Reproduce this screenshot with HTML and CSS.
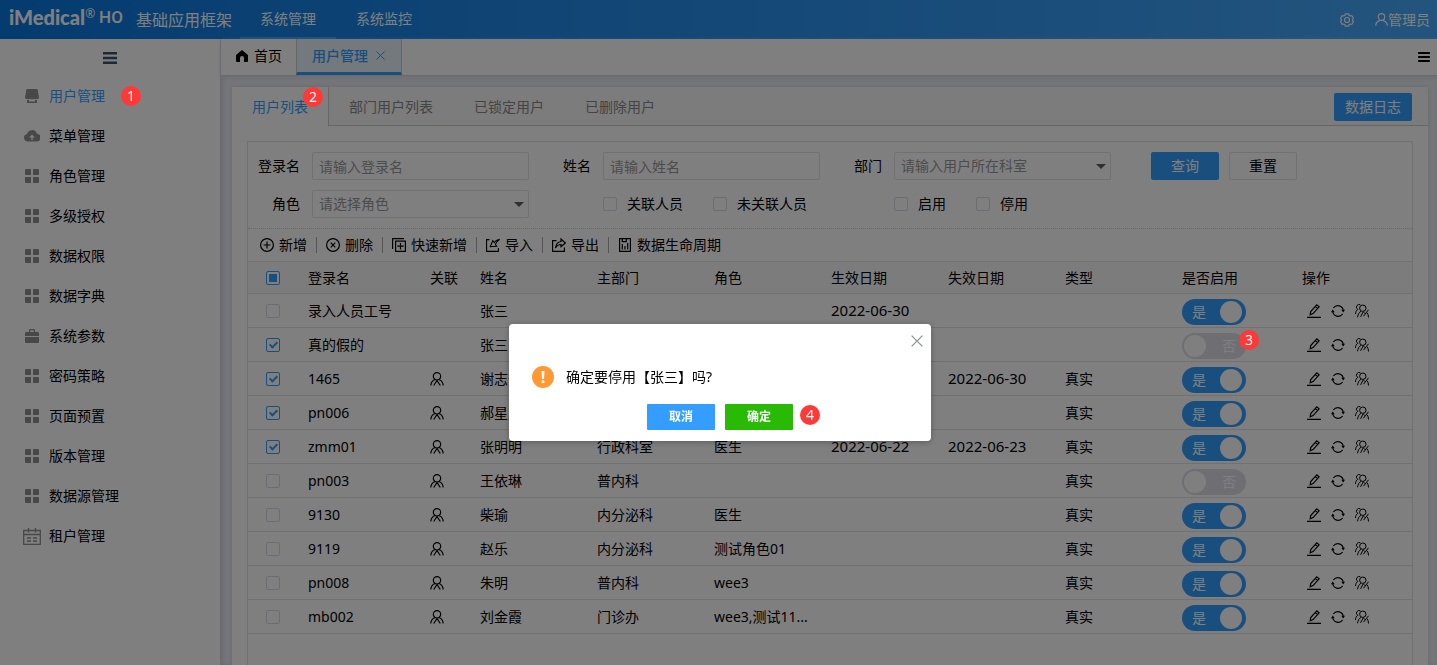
FILE: index.html
```html
<!DOCTYPE html>
<html lang="zh-CN">
<head>
<meta charset="utf-8">
<title>基础应用框架</title>
<link rel="stylesheet" href="styles.css">
</head>
<body>
<svg class="sprite" aria-hidden="true">
  <symbol id="i-grid" viewBox="0 0 14 14"><path fill="currentColor" d="M1 0h4a1 1 0 0 1 1 1v5H1a1 1 0 0 1-1-1V1a1 1 0 0 1 1-1zM9 0h4a1 1 0 0 1 1 1v4a1 1 0 0 1-1 1H8V1a1 1 0 0 1 1-1zM0 8h6v6H1a1 1 0 0 1-1-1zM8 8h5a1 1 0 0 1 1 1v4a1 1 0 0 1-1 1H8z"/></symbol>
  <symbol id="i-store" viewBox="0 0 14 14"><path fill="currentColor" d="M1.500 0h11L14 8.500a1.500 1.500 0 0 1-2.300 1.200 1.600 1.600 0 0 1-2.300 0 1.700 1.700 0 0 1-2.400 0 1.700 1.700 0 0 1-2.400 0 1.600 1.600 0 0 1-2.300 0A1.500 1.500 0 0 1 0 8.500zM2 11h2v1.500h6V11h2v3H2z"/></symbol>
  <symbol id="i-cloud" viewBox="0 0 16 14"><path fill="currentColor" fill-rule="evenodd" d="M3.800 12.500A3.800 3.800 0 0 1 3 5 5.200 5.200 0 0 1 13 4.800a3.800 3.800 0 0 1-.8 7.700zM8 5.500 5 8.500h2.300v2.500h1.400V8.500H11z"/></symbol>
  <symbol id="i-case" viewBox="0 0 14 14"><path fill="currentColor" fill-rule="evenodd" d="M4 3V1a1 1 0 0 1 1-1h4a1 1 0 0 1 1 1v2h3a1 1 0 0 1 1 1v3H0V4a1 1 0 0 1 1-1zm1.200 0h3.600V1.200H5.200zM0 8h14v5a1 1 0 0 1-1 1H1a1 1 0 0 1-1-1z"/></symbol>
  <symbol id="i-cal" viewBox="0 0 18 17"><path fill="none" stroke="currentColor" stroke-width="1.300" d="M.7 2.500h16.600v13.800H.7zM5.500 0v4.500M12.500 0v4.500M.7 6.500h16.600M4 10h4M10 10h4M4 13h4M10 13h4"/></symbol>
  <symbol id="i-bars" viewBox="0 0 14 12"><path fill="currentColor" d="M0 0h14v2.400H0zM0 4.800h14v2.400H0zM0 9.600h14V12H0z"/></symbol>
  <symbol id="i-home" viewBox="0 0 12 12"><path fill="currentColor" d="M6 0l6 5v6a1 1 0 0 1-1 1H8V8a2 2 0 0 0-4 0v4H1a1 1 0 0 1-1-1V5z"/></symbol>
  <symbol id="i-gear" viewBox="0 0 14 14"><g fill="none" stroke="currentColor" stroke-width="1.200"><circle cx="7" cy="7" r="2.500"/><path stroke-linejoin="round" d="M5.400.8h3.200l.5 1.500 1.300.7 1.500-.3 1.500 2.500L12.300 7l1.100 1.700-1.500 2.600-1.500-.3-1.300.7-.5 1.500H5.400l-.5-1.500-1.300-.7-1.500.3L.6 8.700 1.700 7 .6 5.300l1.500-2.600 1.500.3 1.300-.7z"/></g></symbol>
  <symbol id="i-user" viewBox="0 0 13 13"><g fill="none" stroke="currentColor" stroke-width="1.200"><path d="M6.500.6c2 0 3.200 1.300 3.200 3.200S8.500 7.400 6.500 7.400 3.300 5.700 3.300 3.800 4.500.6 6.500.6z"/><path d="M.7 12.800c0-2.600 1.700-4.500 4.300-5.400M8 7.400c2.600.9 4.300 2.800 4.300 5.400"/></g></symbol>
  <symbol id="i-add" viewBox="0 0 14 14"><path fill="none" stroke="currentColor" stroke-width="1.200" d="M7 .6a6.400 6.400 0 1 1 0 12.800A6.400 6.400 0 0 1 7 .6zM3.500 7h7M7 3.500v7"/></symbol>
  <symbol id="i-del" viewBox="0 0 14 14"><path fill="none" stroke="currentColor" stroke-width="1.200" d="M7 .6a6.400 6.400 0 1 1 0 12.800A6.400 6.400 0 0 1 7 .6zM4.700 4.700l4.600 4.600M9.300 4.700L4.700 9.300"/></symbol>
  <symbol id="i-copy" viewBox="0 0 14 14"><path fill="none" stroke="currentColor" stroke-width="1.200" d="M3.600 3.100h9.800v10.300H3.600zM8.500 5v6.500M5.300 8.200h6.400M.6 11V.6H12"/></symbol>
  <symbol id="i-in" viewBox="0 0 14 14"><path fill="none" stroke="currentColor" stroke-width="1.100" d="M3.500 1.600H.6v11.800h11.800V10M13.600 1.200C11 1.600 9.300 2.800 8.300 4.600L6.800 2.600 4.300 8.600l6.400-.4-1.400-1.800c.7-1.700 2-3.500 4.300-5.200z"/></symbol>
  <symbol id="i-out" viewBox="0 0 14 14"><path fill="none" stroke="currentColor" stroke-width="1.200" d="M4.500 2.600H.6v10.800h11.800V9.500M3.500 10C4 6 6 3.800 9 3.500V1l4.400 4L9 8.800V6.500C6.500 6.500 5 7.500 3.500 10z"/></symbol>
  <symbol id="i-life" viewBox="0 0 14 14"><path fill="none" stroke="currentColor" stroke-width="1.200" d="M1.600.6h10.800v12.800H1.600zM4.300 11.500V6M7 11.500V8M9.700 11.500V5M4.300.6v3h4v-3"/></symbol>
  <symbol id="i-man" viewBox="0 0 14 14"><g fill="none" stroke="currentColor" stroke-width="1.200"><circle cx="7" cy="4.300" r="3.700"/><path d="M5 7.500C2.300 8.500 1 10.500.8 13.500M9 7.500c2.700 1 4 3 4.200 6M3.700 13.500L7 8.500l3.300 5"/></g></symbol>
  <symbol id="i-edit" viewBox="0 0 14 14"><path fill="none" stroke="currentColor" stroke-width="1.200" d="M0 13.300h14M3.200 10.800l.5-3.300L9.800.9l2.300 2-6 6.700zM8.300 2.600l2.300 2"/></symbol>
  <symbol id="i-sync" viewBox="0 0 14 14"><path fill="none" stroke="currentColor" stroke-width="1.200" d="M2.400 4A5.500 5.500 0 0 1 12.300 6.500M11.600 10A5.500 5.500 0 0 1 1.700 7.500"/><path fill="currentColor" d="M10.300 5.800H14l-1.800 2.700zM0 8.200h3.700L1.800 5.500z"/></symbol>
  <symbol id="i-team" viewBox="0 0 14 14"><g fill="none" stroke="currentColor"><path d="M5.300.8A2.500 2.500 0 1 0 2.800 5.300C1.300 6.300.5 8 .5 10M6 7.300C4 8.500 2.800 10.500 2.600 13.300M5.600 12.800L8.200 7.800l1.600 1.600M13.500 13.500c0-2-.5-3.600-1.500-4.800M13.500 5.800l-5 6.400"/><circle cx="7.800" cy="4.200" r="3.200"/></g></symbol>
  <symbol id="i-x" viewBox="0 0 10 10"><path fill="none" stroke="currentColor" stroke-width="1.100" d="M.5.5l9 9M9.500.5l-9 9"/></symbol>
  <symbol id="i-warn" viewBox="0 0 22 22"><circle cx="11" cy="11" r="11" fill="#ff9933"/><path fill="#fff" d="M9.500 5h3l-.5 8h-2z"/><circle cx="11" cy="15.800" r="1.500" fill="#fff"/></symbol>
</svg>

<header class="topbar">
  <div class="logo"><b class="logo-name">iMedical</b><sup class="logo-mark">®</sup><span class="logo-suffix">HO</span></div>
  <div class="product">基础应用框架</div>
  <nav class="topnav">
    <a class="topnav-item is-active" href="#sys">系统管理</a>
    <a class="topnav-item" href="#monitor">系统监控</a>
  </nav>
  <button class="plain gear" type="button" aria-label="设置"><svg class="ico14"><use href="#i-gear"/></svg></button>
  <button class="plain account" type="button"><svg class="ico13"><use href="#i-user"/></svg>管理员</button>
</header>

<div class="shell">
  <aside class="sidebar">
    <button class="plain collapse" type="button" aria-label="折叠"><svg class="bars"><use href="#i-bars"/></svg></button>
    <nav>
      <a class="side-item is-active" href="#u"><span class="side-ico"><svg class="ico14"><use href="#i-store"/></svg></span>用户管理<span class="badge badge-menu">1</span></a>
      <a class="side-item" href="#u"><span class="side-ico"><svg class="ico-wide"><use href="#i-cloud"/></svg></span>菜单管理</a>
      <a class="side-item" href="#u"><span class="side-ico"><svg class="ico14"><use href="#i-grid"/></svg></span>角色管理</a>
      <a class="side-item" href="#u"><span class="side-ico"><svg class="ico14"><use href="#i-grid"/></svg></span>多级授权</a>
      <a class="side-item" href="#u"><span class="side-ico"><svg class="ico14"><use href="#i-grid"/></svg></span>数据权限</a>
      <a class="side-item" href="#u"><span class="side-ico"><svg class="ico14"><use href="#i-grid"/></svg></span>数据字典</a>
      <a class="side-item" href="#u"><span class="side-ico"><svg class="ico14"><use href="#i-case"/></svg></span>系统参数</a>
      <a class="side-item" href="#u"><span class="side-ico"><svg class="ico14"><use href="#i-grid"/></svg></span>密码策略</a>
      <a class="side-item" href="#u"><span class="side-ico"><svg class="ico14"><use href="#i-grid"/></svg></span>页面预置</a>
      <a class="side-item" href="#u"><span class="side-ico"><svg class="ico14"><use href="#i-grid"/></svg></span>版本管理</a>
      <a class="side-item" href="#u"><span class="side-ico"><svg class="ico14"><use href="#i-grid"/></svg></span>数据源管理</a>
      <a class="side-item" href="#u"><span class="side-ico"><svg class="ico-cal"><use href="#i-cal"/></svg></span>租户管理</a>
    </nav>
  </aside>

  <main class="main">
    <div class="pagetabs">
      <a class="pagetab" href="#home"><svg class="ico12"><use href="#i-home"/></svg>首页</a>
      <a class="pagetab is-active" href="#users">用户管理<svg class="ico9"><use href="#i-x"/></svg></a>
      <button class="plain tabmenu" type="button" aria-label="更多"><svg class="bars-small"><use href="#i-bars"/></svg></button>
    </div>

    <section class="panel">
      <div class="subtabs">
        <a class="subtab is-active" href="#list">用户列表<span class="badge badge-tab">2</span></a>
        <a class="subtab" href="#dept">部门用户列表</a>
        <a class="subtab" href="#locked">已锁定用户</a>
        <a class="subtab" href="#deleted">已删除用户</a>
        <button class="btn btn-primary btn-log" type="button">数据日志</button>
      </div>

      <div class="card">
        <form class="filters">
          <label for="f-login">登录名</label>
          <input class="field" id="f-login" type="text" placeholder="请输入登录名">
          <label for="f-name">姓名</label>
          <input class="field" id="f-name" type="text" placeholder="请输入姓名">
          <label for="f-dept">部门</label>
          <span class="combo"><select class="field" id="f-dept"><option>请输入用户所在科室</option></select></span>
          <div class="filter-actions">
            <button class="btn btn-primary" type="button">查询</button>
            <button class="btn btn-plain" type="button">重置</button>
          </div>
          <label for="f-role">角色</label>
          <span class="combo"><select class="field" id="f-role"><option>请选择角色</option></select></span>
          <div class="checks checks-link">
            <label class="check"><input class="box" type="checkbox">关联人员</label>
            <label class="check"><input class="box" type="checkbox">未关联人员</label>
          </div>
          <div class="checks checks-state">
            <label class="check"><input class="box" type="checkbox">启用</label>
            <label class="check"><input class="box" type="checkbox">停用</label>
          </div>
        </form>

        <div class="toolbar">
          <button class="plain tool" type="button"><svg class="ico14"><use href="#i-add"/></svg>新增</button>
          <button class="plain tool" type="button"><svg class="ico14"><use href="#i-del"/></svg>删除</button>
          <button class="plain tool" type="button"><svg class="ico14"><use href="#i-copy"/></svg>快速新增</button>
          <button class="plain tool" type="button"><svg class="ico14"><use href="#i-in"/></svg>导入</button>
          <button class="plain tool" type="button"><svg class="ico14"><use href="#i-out"/></svg>导出</button>
          <button class="plain tool" type="button"><svg class="ico14"><use href="#i-life"/></svg>数据生命周期</button>
        </div>

        <table class="grid">
          <colgroup><col class="c-check"><col class="c-login"><col class="c-link"><col class="c-std"><col class="c-std"><col class="c-std"><col class="c-std"><col class="c-std"><col class="c-std"><col class="c-switch"><col></colgroup>
          <thead>
            <tr><th class="sel"><input class="box box-some" type="checkbox" aria-label="全选"></th><th>登录名</th><th>关联</th><th>姓名</th><th>主部门</th><th>角色</th><th>生效日期</th><th>失效日期</th><th>类型</th><th>是否启用</th><th>操作</th></tr>
          </thead>
          <tbody>
            <tr><td class="sel"><input class="box" type="checkbox" aria-label="选择"></td><td>录入人员工号</td><td></td><td>张三</td><td></td><td></td><td class="date">2022-06-30</td><td class="date"></td><td></td>
              <td class="sw"><label class="switch"><input type="checkbox" checked><span class="on">是</span><span class="off">否</span></label></td>
              <td class="ops"><button class="plain" type="button" aria-label="编辑"><svg class="ico14"><use href="#i-edit"/></svg></button><button class="plain" type="button" aria-label="刷新"><svg class="ico14"><use href="#i-sync"/></svg></button><button class="plain" type="button" aria-label="授权"><svg class="ico14"><use href="#i-team"/></svg></button></td></tr>
            <tr><td class="sel"><input class="box" type="checkbox" aria-label="选择" checked></td><td>真的假的</td><td></td><td>张三</td><td></td><td></td><td class="date"></td><td class="date"></td><td></td>
              <td class="sw"><label class="switch"><input type="checkbox"><span class="on">是</span><span class="off">否</span><span class="badge badge-switch">3</span></label></td>
              <td class="ops"><button class="plain" type="button" aria-label="编辑"><svg class="ico14"><use href="#i-edit"/></svg></button><button class="plain" type="button" aria-label="刷新"><svg class="ico14"><use href="#i-sync"/></svg></button><button class="plain" type="button" aria-label="授权"><svg class="ico14"><use href="#i-team"/></svg></button></td></tr>
            <tr><td class="sel"><input class="box" type="checkbox" aria-label="选择" checked></td><td>1465</td><td><svg class="ico14"><use href="#i-man"/></svg></td><td>谢志伟</td><td></td><td></td><td class="date"></td><td class="date">2022-06-30</td><td>真实</td>
              <td class="sw"><label class="switch"><input type="checkbox" checked><span class="on">是</span><span class="off">否</span></label></td>
              <td class="ops"><button class="plain" type="button" aria-label="编辑"><svg class="ico14"><use href="#i-edit"/></svg></button><button class="plain" type="button" aria-label="刷新"><svg class="ico14"><use href="#i-sync"/></svg></button><button class="plain" type="button" aria-label="授权"><svg class="ico14"><use href="#i-team"/></svg></button></td></tr>
            <tr><td class="sel"><input class="box" type="checkbox" aria-label="选择" checked></td><td>pn006</td><td><svg class="ico14"><use href="#i-man"/></svg></td><td>郝星辰</td><td></td><td></td><td class="date"></td><td class="date"></td><td>真实</td>
              <td class="sw"><label class="switch"><input type="checkbox" checked><span class="on">是</span><span class="off">否</span></label></td>
              <td class="ops"><button class="plain" type="button" aria-label="编辑"><svg class="ico14"><use href="#i-edit"/></svg></button><button class="plain" type="button" aria-label="刷新"><svg class="ico14"><use href="#i-sync"/></svg></button><button class="plain" type="button" aria-label="授权"><svg class="ico14"><use href="#i-team"/></svg></button></td></tr>
            <tr><td class="sel"><input class="box" type="checkbox" aria-label="选择" checked></td><td>zmm01</td><td><svg class="ico14"><use href="#i-man"/></svg></td><td>张明明</td><td>行政科室</td><td>医生</td><td class="date">2022-06-22</td><td class="date">2022-06-23</td><td>真实</td>
              <td class="sw"><label class="switch"><input type="checkbox" checked><span class="on">是</span><span class="off">否</span></label></td>
              <td class="ops"><button class="plain" type="button" aria-label="编辑"><svg class="ico14"><use href="#i-edit"/></svg></button><button class="plain" type="button" aria-label="刷新"><svg class="ico14"><use href="#i-sync"/></svg></button><button class="plain" type="button" aria-label="授权"><svg class="ico14"><use href="#i-team"/></svg></button></td></tr>
            <tr><td class="sel"><input class="box" type="checkbox" aria-label="选择"></td><td>pn003</td><td><svg class="ico14"><use href="#i-man"/></svg></td><td>王依琳</td><td>普内科</td><td></td><td class="date"></td><td class="date"></td><td>真实</td>
              <td class="sw"><label class="switch"><input type="checkbox"><span class="on">是</span><span class="off">否</span></label></td>
              <td class="ops"><button class="plain" type="button" aria-label="编辑"><svg class="ico14"><use href="#i-edit"/></svg></button><button class="plain" type="button" aria-label="刷新"><svg class="ico14"><use href="#i-sync"/></svg></button><button class="plain" type="button" aria-label="授权"><svg class="ico14"><use href="#i-team"/></svg></button></td></tr>
            <tr><td class="sel"><input class="box" type="checkbox" aria-label="选择"></td><td>9130</td><td><svg class="ico14"><use href="#i-man"/></svg></td><td>柴瑜</td><td>内分泌科</td><td>医生</td><td class="date"></td><td class="date"></td><td>真实</td>
              <td class="sw"><label class="switch"><input type="checkbox" checked><span class="on">是</span><span class="off">否</span></label></td>
              <td class="ops"><button class="plain" type="button" aria-label="编辑"><svg class="ico14"><use href="#i-edit"/></svg></button><button class="plain" type="button" aria-label="刷新"><svg class="ico14"><use href="#i-sync"/></svg></button><button class="plain" type="button" aria-label="授权"><svg class="ico14"><use href="#i-team"/></svg></button></td></tr>
            <tr><td class="sel"><input class="box" type="checkbox" aria-label="选择"></td><td>9119</td><td><svg class="ico14"><use href="#i-man"/></svg></td><td>赵乐</td><td>内分泌科</td><td>测试角色01</td><td class="date"></td><td class="date"></td><td>真实</td>
              <td class="sw"><label class="switch"><input type="checkbox" checked><span class="on">是</span><span class="off">否</span></label></td>
              <td class="ops"><button class="plain" type="button" aria-label="编辑"><svg class="ico14"><use href="#i-edit"/></svg></button><button class="plain" type="button" aria-label="刷新"><svg class="ico14"><use href="#i-sync"/></svg></button><button class="plain" type="button" aria-label="授权"><svg class="ico14"><use href="#i-team"/></svg></button></td></tr>
            <tr><td class="sel"><input class="box" type="checkbox" aria-label="选择"></td><td>pn008</td><td><svg class="ico14"><use href="#i-man"/></svg></td><td>朱明</td><td>普内科</td><td>wee3</td><td class="date"></td><td class="date"></td><td>真实</td>
              <td class="sw"><label class="switch"><input type="checkbox" checked><span class="on">是</span><span class="off">否</span></label></td>
              <td class="ops"><button class="plain" type="button" aria-label="编辑"><svg class="ico14"><use href="#i-edit"/></svg></button><button class="plain" type="button" aria-label="刷新"><svg class="ico14"><use href="#i-sync"/></svg></button><button class="plain" type="button" aria-label="授权"><svg class="ico14"><use href="#i-team"/></svg></button></td></tr>
            <tr><td class="sel"><input class="box" type="checkbox" aria-label="选择"></td><td>mb002</td><td><svg class="ico14"><use href="#i-man"/></svg></td><td>刘金霞</td><td>门诊办</td><td>wee3,测试11...</td><td class="date"></td><td class="date"></td><td>真实</td>
              <td class="sw"><label class="switch"><input type="checkbox" checked><span class="on">是</span><span class="off">否</span></label></td>
              <td class="ops"><button class="plain" type="button" aria-label="编辑"><svg class="ico14"><use href="#i-edit"/></svg></button><button class="plain" type="button" aria-label="刷新"><svg class="ico14"><use href="#i-sync"/></svg></button><button class="plain" type="button" aria-label="授权"><svg class="ico14"><use href="#i-team"/></svg></button></td></tr>
          </tbody>
        </table>
      </div>
    </section>
  </main>
</div>

<div class="mask">
  <div class="dialog" role="dialog" aria-modal="true" aria-labelledby="dlg-text">
    <button class="plain dialog-close" type="button" aria-label="关闭"><svg class="ico12"><use href="#i-x"/></svg></button>
    <div class="dialog-body"><svg class="ico22"><use href="#i-warn"/></svg><span id="dlg-text">确定要停用【张三】吗?</span></div>
    <div class="dialog-foot">
      <button class="btn-dlg btn-cancel" type="button">取消</button>
      <button class="btn-dlg btn-ok" type="button">确定</button>
      <span class="badge badge-ok">4</span>
    </div>
  </div>
</div>
</body>
</html>
```

FILE: styles.css
```css
:root {
  --blue: #339eff;
  --line: #e2e2e2;
  --text: #000;
}

*, *::before, *::after { box-sizing: border-box; }

body {
  margin: 0;
  height: 100vh;
  overflow: hidden;
  display: flex;
  flex-direction: column;
  font: 400 14px/20px "Noto Sans", "Noto Sans CJK SC", sans-serif;
  color: var(--text);
  background: #fff;
}

a { color: inherit; text-decoration: none; }
button, input, select { font: inherit; color: inherit; margin: 0; }
svg { display: block; flex: none; }

.sprite { position: absolute; width: 0; height: 0; }
.ico9 { width: 9px; height: 9px; }
.ico12 { width: 12px; height: 12px; }
.ico13 { width: 13px; height: 13px; }
.ico14 { width: 14px; height: 14px; }
.ico22 { width: 22px; height: 22px; }
.ico-wide { width: 16px; height: 14px; }
.ico-cal { width: 18px; height: 17px; }
.bars { width: 14px; height: 12px; }
.bars-small { width: 12px; height: 10px; }

.plain {
  padding: 0;
  border: 0;
  background: none;
}

/* header */
.topbar {
  display: flex;
  align-items: center;
  height: 39px;
  flex: none;
  padding: 0 7px 0 9px;
  color: #fff;
  background: linear-gradient(to right, #0a78e0, #46a9fc);
}
.logo {
  display: flex;
  align-items: center;
  align-self: flex-start;
  width: 127px;
  height: 34px;
}
.logo-name { font: 900 20px/24px Lato, sans-serif; }
.logo-mark { font-size: 12px; line-height: 12px; align-self: flex-start; padding-top: 8px; }
.logo-suffix { font: 500 17px/24px Roboto, sans-serif; margin-left: 4px; }
.product { font-size: 16px; width: 104px; }
.topnav { display: flex; align-self: stretch; flex: 1; }
.topnav-item {
  width: 96px;
  line-height: 37px;
  text-align: center;
  border-bottom: 2px solid transparent;
}
.topnav-item.is-active { border-bottom-color: #3d9ff5; }
.gear { margin-right: 21px; }
.account { display: flex; align-items: center; }

/* shell */
.shell { display: flex; flex: 1; min-height: 0; }
.sidebar {
  width: 220px;
  flex: none;
  background: #fff;
}
.collapse {
  display: flex;
  justify-content: center;
  width: 100%;
  height: 37px;
  padding-top: 13px;
  color: #40506c;
}
.side-item {
  display: flex;
  align-items: center;
  height: 40px;
  padding-left: 23px;
}
.side-ico {
  display: flex;
  justify-content: center;
  width: 18px;
  margin-right: 8px;
  color: #909090;
}
.side-item.is-active { color: var(--blue); }

.main {
  flex: 1;
  min-width: 0;
  display: flex;
  flex-direction: column;
  background: #ebecf4;
  box-shadow: inset 3px 0 5px #d4d5dd;
}
.pagetabs {
  display: flex;
  height: 37px;
  flex: none;
  margin-left: 1px;
  background: #fff;
  border-bottom: 1px solid #d4d4d8;
  box-shadow: 0 2px 4px #d8d9e2;
}
.pagetab {
  display: flex;
  align-items: center;
  gap: 6px;
  padding: 0 14px 2px 15px;
}
.pagetab.is-active {
  gap: 8px;
  padding: 0 16px 0 15px;
  color: var(--blue);
  font-weight: 500;
  background: #e8f2fb;
  border-left: 1px solid #ccc;
  border-right: 1px solid #ccc;
  border-bottom: 3px solid var(--blue);
}
.tabmenu { margin-left: auto; padding-right: 7px; }

.panel {
  flex: 1;
  min-height: 0;
  display: flex;
  flex-direction: column;
  margin: 11px 9px 0 12px;
  background: #fff;
  box-shadow: 0 0 4px #ccced8;
}
.subtabs {
  display: flex;
  align-items: center;
  flex: none;
  height: 39px;
  padding-right: 16px;
  background: #f9f9fa;
  border-bottom: 1px solid #ccc;
}
.subtab {
  align-self: stretch;
  line-height: 40px;
  margin-right: 41px;
  color: #888;
}
.subtab.is-active {
  position: relative;
  height: 39px;
  margin-right: 20px;
  padding: 0 20px;
  color: var(--blue);
  background: #fff;
  border-right: 1px solid #ccc;
}

.btn {
  height: 28px;
  padding: 0 19px;
  border: 1px solid transparent;
  border-radius: 2px;
}
.btn-primary { color: #fff; background: var(--blue); }
.btn-plain { background: #fff; border-color: var(--line); }
.btn-log { margin: 2px 0 0 auto; padding: 0 10px; }

.card {
  flex: 1;
  min-height: 0;
  overflow: hidden;
  margin: 15px 15px 0;
  border: 1px solid var(--line);
  border-bottom: 0;
}

/* filters */
.filters {
  display: grid;
  grid-template-columns: 64px 217px 74px 217px 74px 217px auto;
  row-gap: 10px;
  align-items: center;
  padding: 10px 0;
  border-bottom: 1px dotted #ccc;
}
.filters > label { text-align: right; padding-right: 12px; }
.field {
  width: 100%;
  height: 28px;
  padding: 0 6px;
  background: #fff;
  border: 1px solid var(--line);
  border-radius: 2px;
  appearance: none;
  display: block;
}
.field::placeholder { color: #999; opacity: 1; }
select.field { color: #999; }
.combo { position: relative; }
.combo::after {
  content: "";
  position: absolute;
  right: 5px;
  top: 12px;
  border: 5px solid transparent;
  border-top-color: #606060;
  border-bottom: 0;
}
.filter-actions { display: flex; gap: 10px; padding-left: 40px; }
.checks { display: flex; gap: 30px; }
.checks-link { grid-column: 4 / 5; }
.checks-state { grid-column: 6 / 8; }
.check { display: flex; align-items: center; gap: 10px; white-space: nowrap; }

.box {
  appearance: none;
  display: block;
  position: relative;
  width: 14px;
  height: 14px;
  border: 1px solid #d9d9e2;
  border-radius: 2px;
  background: #fff;
}
.box:checked, .box-some { border-color: var(--blue); }
.box:checked::after {
  content: "";
  position: absolute;
  left: 4px;
  top: 1px;
  width: 5px;
  height: 8px;
  border: solid var(--blue);
  border-width: 0 2px 2px 0;
  transform: rotate(45deg);
}
.box-some::after {
  content: "";
  position: absolute;
  inset: 2px;
  background: var(--blue);
}

/* toolbar */
.toolbar { display: flex; align-items: center; height: 32px; padding-left: 12px; }
.tool { display: flex; align-items: center; gap: 5px; }
.tool + .tool::before {
  content: "";
  width: 1px;
  height: 16px;
  margin: 0 4px 0 9px;
  background: #aaa;
}

/* table */
.grid {
  width: 100%;
  table-layout: fixed;
  border-collapse: separate;
  border-spacing: 0;
}
.c-check { width: 52px; }
.c-login { width: 122px; }
.c-link { width: 50px; }
.c-std { width: 117px; }
.c-switch { width: 120px; }
.grid th, .grid td {
  height: 34px;
  padding: 0 8px;
  text-align: left;
  font-weight: inherit;
  white-space: nowrap;
  border-bottom: 1px solid var(--line);
}
.grid th {
  height: 33px;
  background: #f9f9fa;
  border-top: 1px solid var(--line);
}
.grid .sel { padding-left: 18px; }
.grid .date { font-size: 15px; padding-bottom: 2px; }
.grid .sw { padding-top: 2px; }
.ops .plain { vertical-align: middle; margin-right: 10px; }
.grid .ops { padding: 0 0 2px 13px; }

.switch {
  display: block;
  position: relative;
  width: 64px;
  height: 26px;
  border-radius: 13px;
  background: #dcdde6;
  color: #fff;
  line-height: 26px;
}
.switch input {
  appearance: none;
  position: absolute;
  left: 2px;
  top: 2px;
  width: 22px;
  height: 22px;
  border-radius: 50%;
  background: #fff;
}
.switch:has(input:checked) { background: var(--blue); }
.switch input:checked { left: 38px; }
.on { display: none; padding-left: 10px; }
.off { display: block; padding-left: 40px; }
.switch input:checked ~ .on { display: block; }
.switch input:checked ~ .off { display: none; }

/* numbered markers */
.badge {
  position: absolute;
  z-index: 20;
  width: 20px;
  height: 20px;
  border-radius: 50%;
  background: #ff3838;
  color: #fff;
  font-size: 14px;
  line-height: 19px;
  text-align: center;
}
.badge-menu { left: 121px; }
.badge-tab { left: 71px; top: 0; }
.badge-switch { left: 57px; top: -3px; }
.badge-ok { left: 153px; top: 1px; }

/* dialog */
.mask {
  position: fixed;
  inset: 0;
  z-index: 10;
  display: flex;
  align-items: center;
  justify-content: center;
  padding: 100px 0 0 3px;
  background: rgba(0, 0, 0, 0.5);
}
.dialog {
  position: relative;
  width: 422px;
  padding: 42px 23px 11px;
  background: #fff;
  border-radius: 4px;
  box-shadow: 0 1px 6px rgba(0, 0, 0, 0.3);
}
.dialog-close { position: absolute; top: 11px; right: 8px; color: #909399; }
.dialog-body { display: flex; align-items: center; gap: 12px; height: 22px; }
.dialog-foot {
  position: relative;
  display: flex;
  gap: 10px;
  width: 146px;
  margin: 16px auto 0;
}
.btn-dlg {
  width: 68px;
  height: 26px;
  padding: 0;
  border: 0;
  border-radius: 1px;
  color: #fff;
  font-size: 12px;
  font-weight: 700;
}
.btn-cancel { background: var(--blue); }
.btn-ok { background: #28ba05; }
```
